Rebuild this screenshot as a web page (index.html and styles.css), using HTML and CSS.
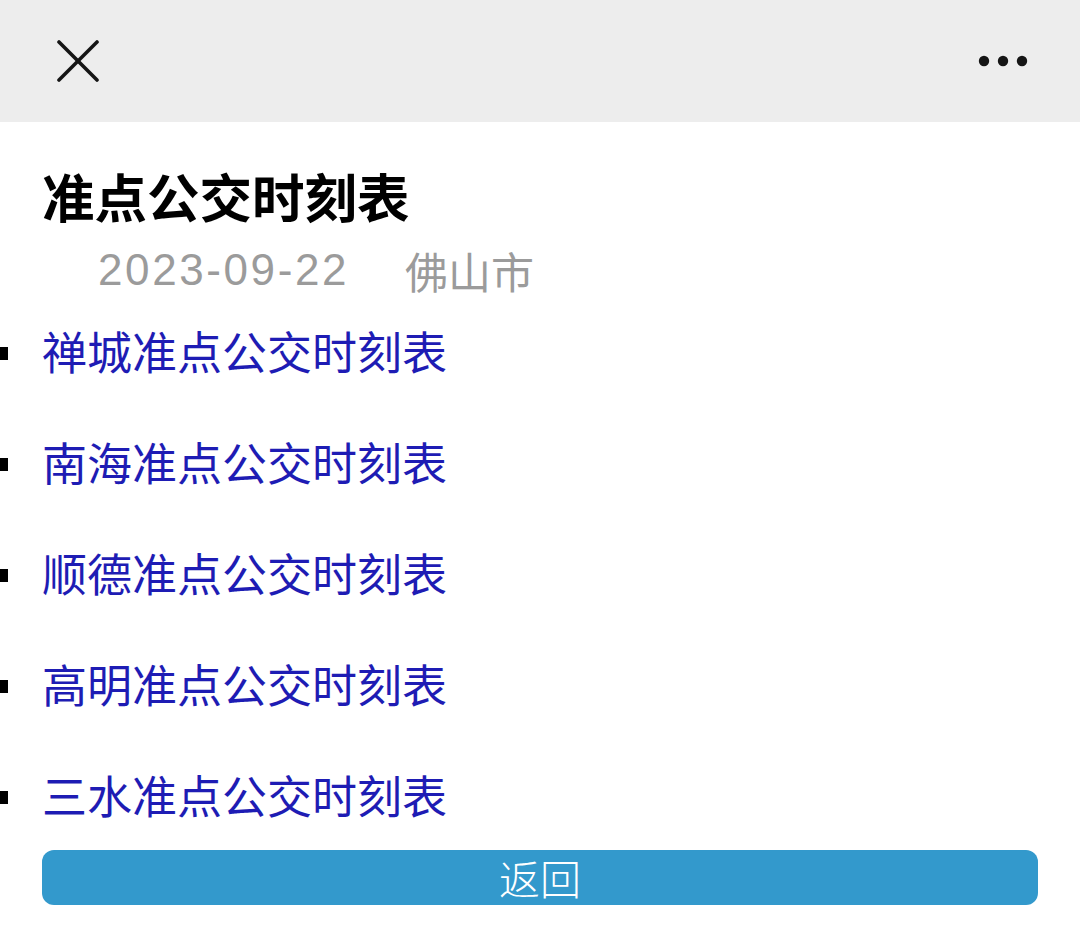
FILE: index.html
```html
<!DOCTYPE html>
<html lang="zh-CN">
<head>
<meta charset="utf-8">
<title>准点公交时刻表</title>
<link rel="stylesheet" href="styles.css">
</head>
<body>
<header class="topbar">
  <svg class="icon-close" width="42" height="42" viewBox="0 0 42 42" aria-label="关闭">
    <line x1="2" y1="2" x2="40" y2="40" stroke="#151515" stroke-width="3.6" stroke-linecap="round"/>
    <line x1="40" y1="2" x2="2" y2="40" stroke="#151515" stroke-width="3.6" stroke-linecap="round"/>
  </svg>
  <svg class="icon-more" width="52" height="14" viewBox="0 0 52 14" aria-label="更多">
    <circle cx="7" cy="7" r="5.2" fill="#151515"/>
    <circle cx="26" cy="7" r="5.2" fill="#151515"/>
    <circle cx="45" cy="7" r="5.2" fill="#151515"/>
  </svg>
</header>
<main class="content">
  <h1 class="title">准点公交时刻表</h1>
  <div class="meta">
    <span class="date">2023-09-22</span>
    <span class="city">佛山市</span>
  </div>
  <ul class="links">
    <li><a href="#">禅城准点公交时刻表</a></li>
    <li><a href="#">南海准点公交时刻表</a></li>
    <li><a href="#">顺德准点公交时刻表</a></li>
    <li><a href="#">高明准点公交时刻表</a></li>
    <li><a href="#">三水准点公交时刻表</a></li>
  </ul>
  <button class="back" type="button">返回</button>
</main>
</body>
</html>
```

FILE: styles.css
```css
html, body {
  margin: 0;
  padding: 0;
  background: #ffffff;
}

body {
  font-family: "Noto Sans CJK SC", "Noto Sans", "Liberation Sans", sans-serif;
  color: #111;
}

.topbar {
  height: 122px;
  background: #ededed;
  display: flex;
  align-items: center;
  justify-content: space-between;
  padding: 0 51px 0 57px;
  box-sizing: border-box;
}

.icon-close {
  display: block;
  margin-top: -1px;
}

.icon-more {
  display: block;
}

.content {
  padding: 0 42px;
}

.title {
  margin: 43px 0 0 0;
  font-size: 52.5px;
  line-height: 60px;
  font-weight: 700;
  color: #000;
}

.meta {
  margin-top: 20px;
  height: 50px;
  display: flex;
  align-items: center;
  padding-left: 56px;
  color: #9b9b9b;
}

.date {
  font-family: "Liberation Sans", "Noto Sans", sans-serif;
  font-size: 44px;
  letter-spacing: 2.6px;
}

.city {
  margin-left: 56px;
  font-size: 43px;
}

.links {
  list-style: none;
  margin: 26px 0 0 0;
  padding: 0;
  display: flex;
  flex-direction: column;
  gap: 51px;
}

.links li {
  display: flex;
  align-items: center;
  height: 60px;
}

.links li::before {
  content: "";
  display: block;
  width: 8px;
  height: 13px;
  background: #000;
  margin-left: -42px;
  margin-right: 34px;
  margin-top: 4px;
}

.links a {
  color: #1e1cb4;
  text-decoration: none;
  font-size: 45px;
  line-height: 60px;
}

.back {
  display: block;
  margin-top: 25px;
  width: 100%;
  height: 55px;
  border: none;
  border-radius: 12px;
  background: #3399cc;
  color: #ffffff;
  font-family: "Noto Sans CJK SC", sans-serif;
  font-size: 41px;
  font-weight: 300;
  line-height: 55px;
  padding: 0;
}
```
